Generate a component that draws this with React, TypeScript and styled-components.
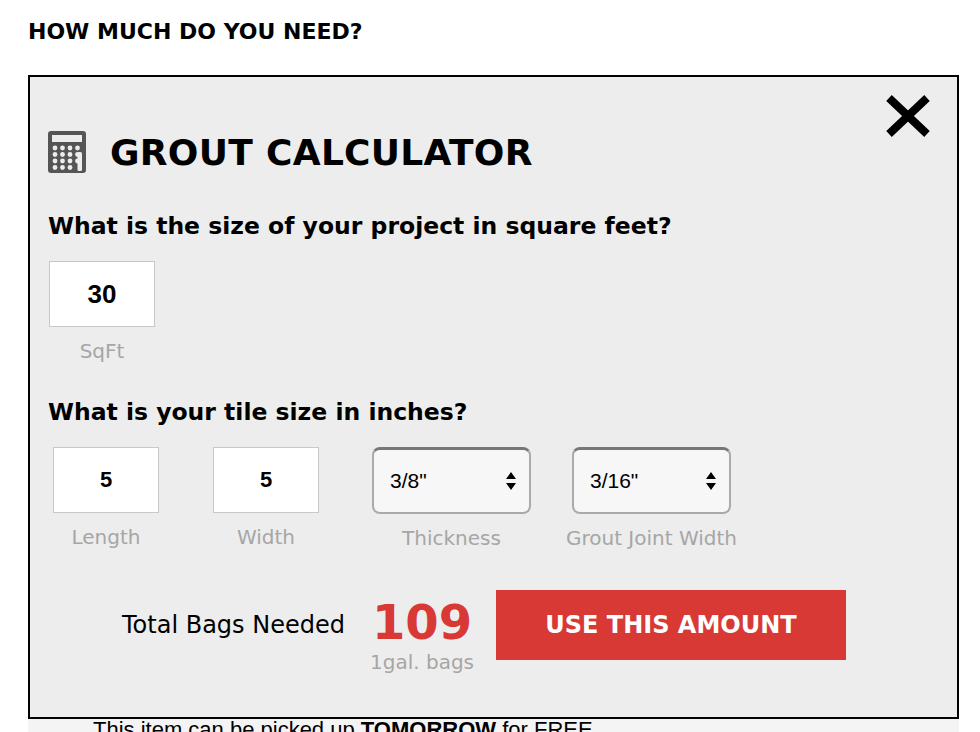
import React from "react";
import styled, { createGlobalStyle } from "styled-components";

const Global = createGlobalStyle`
  html, body { margin: 0; padding: 0; background: #fff; }
  body { font-family: "DejaVu Sans", Verdana, sans-serif; color: #000; overflow: hidden; height: 732px; }
`;

const Page = styled.div`
  padding: 17px 0 0 28px;
  width: 932px;
`;
const PageTitle = styled.h2`
  margin: 0 0 28px 0;
  font-size: 22px;
  font-weight: bold;
  line-height: 30px;
`;
const Modal = styled.div`
  position: relative;
  width: 931px;
  height: 644px;
  border: 2px solid #000;
  background: #ededed;
  padding: 0 0 0 18px;
  box-sizing: border-box;
`;
const Close = styled.button`
  position: absolute;
  right: 26px;
  top: 18px;
  border: 0;
  background: none;
  padding: 0;
  cursor: pointer;
`;
const TitleRow = styled.div`
  display: flex;
  align-items: center;
  gap: 24px;
  padding-top: 54px;
`;
const Title = styled.h1`
  margin: 0;
  font-size: 36px;
  font-weight: bold;
  letter-spacing: 0.3px;
`;
const Question = styled.h3<{ top: number }>`
  margin: ${(p) => p.top}px 0 0 0;
  font-size: 23.5px;
  font-weight: bold;
  line-height: 26px;
  white-space: nowrap;
`;
const FieldRow = styled.div`
  display: flex;
  margin-top: 22px;
  align-items: flex-start;
`;
const Field = styled.div<{ w: number; ml: number }>`
  display: flex;
  flex-direction: column;
  align-items: center;
  width: ${(p) => p.w}px;
  margin-left: ${(p) => p.ml}px;
`;
const NumBox = styled.div<{ size: number }>`
  width: 106px;
  height: 66px;
  box-sizing: border-box;
  background: #fff;
  border: 1px solid #c8c8c8;
  display: flex;
  align-items: center;
  justify-content: center;
  font-family: "Liberation Sans", Arial, sans-serif;
  font-weight: bold;
  font-size: ${(p) => p.size}px;
`;
const SelectBox = styled.div`
  width: 159px;
  height: 67px;
  box-sizing: border-box;
  background: #f7f7f7;
  border: 2px solid #aaa;
  border-top: 3px solid #777;
  border-radius: 8px;
  display: flex;
  align-items: center;
  justify-content: space-between;
  padding: 0 12px 0 16px;
  font-family: "Liberation Sans", Arial, sans-serif;
  font-size: 21px;
`;
const Label = styled.div`
  color: #a6a6a6;
  font-size: 20px;
  margin-top: 12px;
  white-space: nowrap;
`;
const TotalRow = styled.div`
  display: flex;
  align-items: flex-start;
  margin-top: 40px;
  padding-left: 74px;
`;
const TotalLabel = styled.div`
  font-size: 24px;
  margin-top: 21px;
  width: 250px;
  white-space: nowrap;
`;
const Amount = styled.div`
  display: flex;
  flex-direction: column;
  align-items: center;
  width: 100px;
  margin-right: 24px;
`;
const Big = styled.div`
  color: #d93935;
  font-size: 48px;
  font-weight: bold;
  line-height: 60px;
  margin-top: 2px;
`;
const Sub = styled.div`
  color: #a6a6a6;
  font-size: 20px;
  margin-top: -2px;
  white-space: nowrap;
`;
const UseBtn = styled.button`
  width: 350px;
  height: 70px;
  background: #d93935;
  color: #fff;
  border: 0;
  font-family: "DejaVu Sans", Verdana, sans-serif;
  font-weight: bold;
  font-size: 24px;
`;
const Below = styled.div`
  background: #f4f4f4;
  width: 931px;
  height: 40px;
  padding-left: 65px;
  box-sizing: border-box;
  font-family: "Liberation Sans", Arial, sans-serif;
  font-size: 22px;
  line-height: 22px;
`;

const Arrows = () => (
  <svg width="12" height="20" viewBox="0 0 12 20">
    <path d="M6 1 L11 8 H1 Z M6 19 L11 12 H1 Z" fill="#000" />
  </svg>
);

const CalcIcon = () => (
  <svg width="38" height="42" viewBox="0 0 38 42">
    <rect x="0" y="0" width="38" height="42" rx="3" fill="#555" />
    <rect x="4" y="4" width="30" height="7" fill="#ededed" />
    {[0, 1, 2, 3].map((r) =>
      [0, 1, 2, 3].map((c) =>
        r === 3 && c === 3 ? null : (
          <circle key={r + "-" + c} cx={7 + c * 7.5} cy={17 + r * 6.5} r="2.4" fill="#ededed" />
        )
      )
    )}
    <rect x="29.5" y="21" width="4.5" height="19" rx="1.5" fill="#ededed" />
  </svg>
);

export default function App() {
  return (
    <>
      <Global />
      <Page>
        <PageTitle>HOW MUCH DO YOU NEED?</PageTitle>
        <Modal>
          <Close aria-label="close">
            <svg width="46" height="42" viewBox="0 0 46 42">
              <path d="M4 3 L42 39 M42 3 L4 39" stroke="#000" strokeWidth="8" />
            </svg>
          </Close>
          <TitleRow>
            <CalcIcon />
            <Title>GROUT CALCULATOR</Title>
          </TitleRow>
          <Question top={40}>What is the size of your project in square feet?</Question>
          <FieldRow>
            <Field w={106} ml={1}>
              <NumBox size={26}>30</NumBox>
              <Label>SqFt</Label>
            </Field>
          </FieldRow>
          <Question top={36}>What is your tile size in inches?</Question>
          <FieldRow>
            <Field w={106} ml={5}>
              <NumBox size={22}>5</NumBox>
              <Label>Length</Label>
            </Field>
            <Field w={106} ml={54}>
              <NumBox size={22}>5</NumBox>
              <Label>Width</Label>
            </Field>
            <Field w={159} ml={53}>
              <SelectBox>3/8"<Arrows /></SelectBox>
              <Label>Thickness</Label>
            </Field>
            <Field w={159} ml={41}>
              <SelectBox>3/16"<Arrows /></SelectBox>
              <Label>Grout Joint Width</Label>
            </Field>
          </FieldRow>
          <TotalRow>
            <TotalLabel>Total Bags Needed</TotalLabel>
            <Amount>
              <Big>109</Big>
              <Sub>1gal. bags</Sub>
            </Amount>
            <UseBtn>USE THIS AMOUNT</UseBtn>
          </TotalRow>
        </Modal>
        <Below>This item can be picked up <b>TOMORROW</b> for FREE</Below>
      </Page>
    </>
  );
}
